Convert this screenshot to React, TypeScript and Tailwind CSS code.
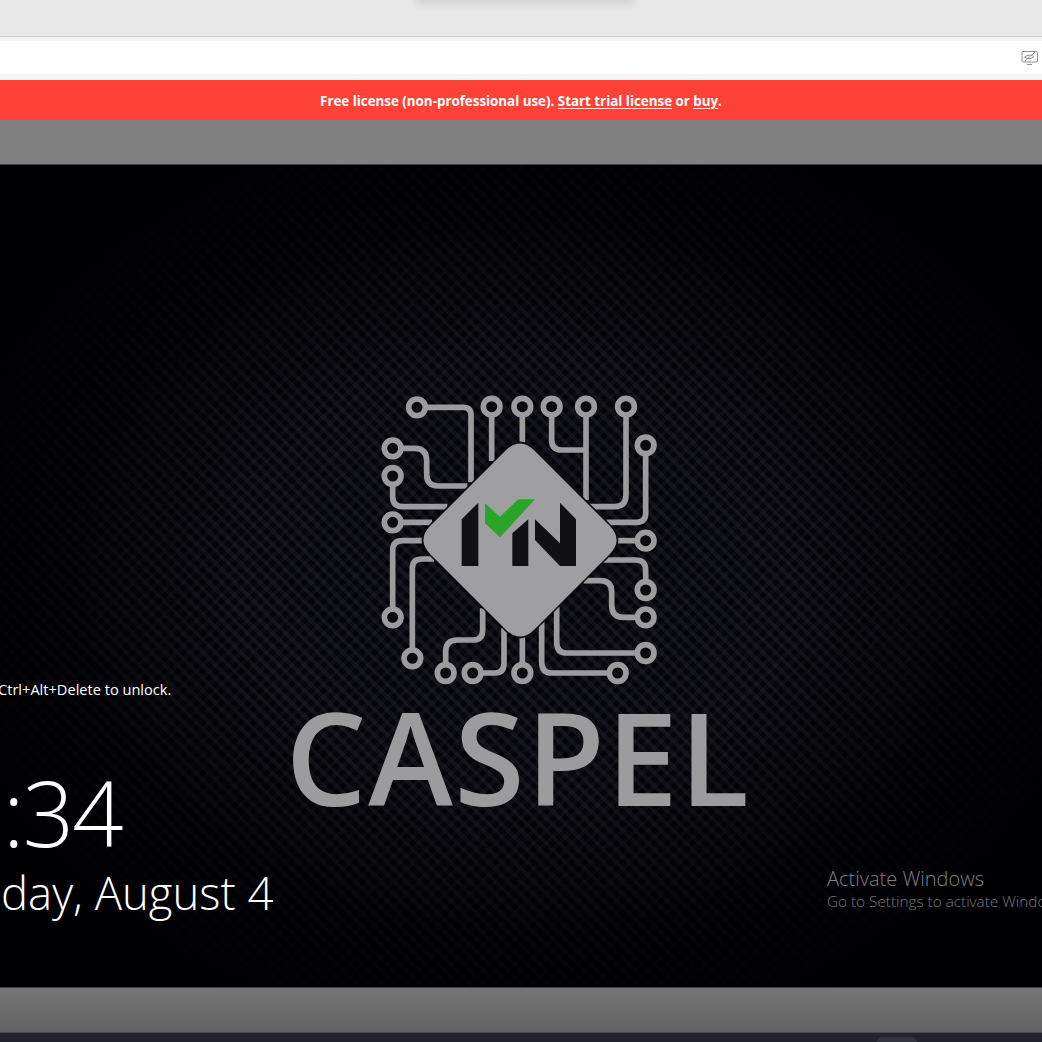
const traces = [
  "M141 67H280Q303 67 303 90V292",
  "M68 190H135Q170 190 170 228V268Q170 303 205 303H292",
  "M365 65V228",
  "M457 65V172",
  "M545 65V165Q545 195 575 195H648",
  "M648 65V345",
  "M768 65V330Q768 365 733 365H660",
  "M827 181V385Q827 412 800 412H710",
  "M68 273V335Q68 365 100 365H232",
  "M68 412H186",
  "M827 467H742",
  "M827 615V555Q827 525 797 525H700",
  "M827 697H760Q725 697 725 660V620Q725 587 690 587H640",
  "M827 804H590Q560 804 560 770V665",
  "M743 864H545Q515 864 515 830V712",
  "M457 864V755",
  "M308 864H375Q402 864 402 835V730",
  "M227 864V800Q227 765 262 765H310Q338 765 338 735V670",
  "M127 820V550Q127 522 155 522H192",
  "M68 697V497Q68 467 98 467H158",
];

const nodes = [
  [141, 67], [365, 65], [457, 65], [545, 65], [648, 65], [768, 65], [827, 181],
  [68, 190], [68, 273], [68, 412], [827, 467], [827, 615], [827, 697], [827, 804],
  [68, 697], [127, 820], [227, 864], [308, 864], [457, 864], [743, 864],
];

function CircuitLogo() {
  return (
    <svg viewBox="0 0 900 930" className="block w-[300px] h-[310px]">
      <g fill="none" stroke="#9c9b9e" strokeWidth="17">
        {traces.map((d) => (
          <path key={d} d={d} />
        ))}
        {nodes.map(([x, y]) => (
          <circle key={`${x}-${y}`} cx={x} cy={y} r="25" fill="#0a0a0f" />
        ))}
      </g>
      <path
        d="M405 195Q450 150 495 195L720 420Q765 465 720 510L495 735Q450 780 405 735L180 510Q135 465 180 420Z"
        fill="#9f9ea1"
        stroke="#0b0b10"
        strokeWidth="5"
      />
      <g fill="#101015">
        <path d="M275 403L325 353V543H275Z" />
        <path d="M427 445L475 403V543H427Z" />
        <path d="M495 403L570 475V353L618 403V543H570L495 465Z" />
      </g>
      <path d="M345 355L390 395L445 343H495L390 457L345 415Z" fill="#2aa52a" />
    </svg>
  );
}

function DisplayOffIcon() {
  return (
    <svg viewBox="0 0 18 17" className="block w-[18px] h-[17px] translate-y-[1px]" fill="none" stroke="#8f8f8f" strokeWidth="1">
      <rect x="1" y="1.5" width="15.5" height="10.5" rx="1" />
      <path d="M6 14.5H11" />
      <path d="M3.5 7Q8 3.5 13 6.5Q9 10.5 3.5 7Z" />
      <path d="M4 11L14 2" />
    </svg>
  );
}

export default function App() {
  return (
    <div className="flex flex-col w-full h-[1042px] overflow-hidden bg-[#808080] font-['Open_Sans','Liberation_Sans',sans-serif]">
      <div className="flex justify-center shrink-0 h-[37px] bg-[#e8e8e8] border-b border-[#cccccc] overflow-hidden">
        <div className="w-[212px] h-px -mt-px shadow-[0_0_8px_3px_rgba(0,0,0,0.14)] translate-x-[4px]" />
      </div>

      <div className="shrink-0 h-[43px] py-[4px] pb-[6px] bg-[#f5f5f5]">
        <div className="flex items-center justify-end h-[33px] pr-[3px] bg-white">
          <DisplayOffIcon />
        </div>
      </div>

      <div className="flex items-center justify-center shrink-0 h-[40px] pt-[3px] bg-[#ff4238] text-white text-[13.35px] font-bold leading-none">
        <p>
          Free license (non-professional use). <span className="underline underline-offset-2">Start trial license</span> or{" "}
          <span className="underline underline-offset-2">buy</span>.
        </p>
      </div>

      <div className="shrink-0 h-[44px] bg-[#808080]" />

      <div className="relative flex flex-col items-center shrink-0 h-[824px] pt-[220px] pr-[2px] overflow-hidden border-y border-[#3f3f42] bg-[#050508] bg-[image:radial-gradient(ellipse_at_50%_50%,rgba(0,0,0,0)_0%,rgba(0,0,0,0.1)_38%,rgba(0,0,4,0.75)_62%,#000003_82%),repeating-linear-gradient(45deg,rgba(60,60,85,0.24)_0_4px,rgba(0,0,0,0)_4px_9px),repeating-linear-gradient(-45deg,rgba(60,60,85,0.15)_0_4px,rgba(0,0,0,0)_4px_9px)]">
        <CircuitLogo />
        <div className="mt-[2px] mr-[4px] h-[120px] text-[128px] leading-[120px] font-semibold tracking-[0.012em] text-[#9c9b9e]">
          CASPEL
        </div>

        <p className="absolute left-[-2px] top-[513px] text-[14.6px] leading-[22px] text-white whitespace-nowrap">
          Ctrl+Alt+Delete to unlock.
        </p>
        <p className="absolute left-[3px] top-[592px] text-[90px] leading-[110px] font-light tracking-[-0.02em] text-white whitespace-nowrap">
          :34
        </p>
        <p className="absolute left-[1px] top-[697px] text-[45.5px] leading-[60px] font-light text-white whitespace-nowrap">
          day, August 4
        </p>

        <div className="absolute left-[827px] top-[701px] font-light whitespace-nowrap">
          <p className="text-[20px] leading-[26px] text-[#808084]">Activate Windows</p>
          <p className="text-[15.3px] leading-[18px] text-[#78787c]">Go to Settings to activate Windows.</p>
        </div>
      </div>

      <div className="shrink-0 h-[44px] bg-gradient-to-b from-[#767676] to-[#626262]" />

      <div className="flex justify-end flex-1 pt-[4px] pr-[125px] bg-[#23232e] border-t border-[#4a4a52]">
        <div className="w-[40px] h-[8px] rounded-t-[5px] bg-[#33333d]" />
      </div>
    </div>
  );
}
